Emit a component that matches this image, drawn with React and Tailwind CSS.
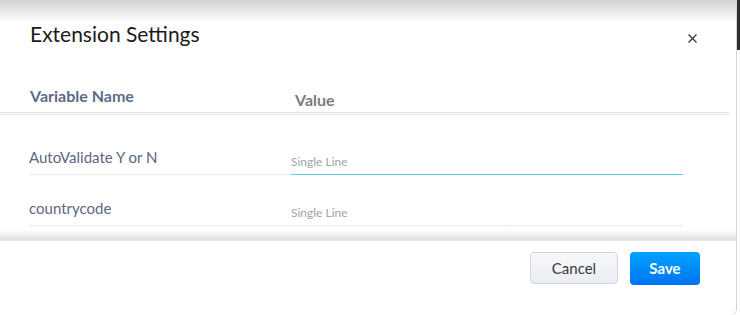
import React from "react";

export default function App() {
  const font = { fontFamily: "Lato, 'Open Sans', 'Liberation Sans', sans-serif" };
  return (
    <div className="w-[740px] h-[315px] bg-white overflow-hidden flex" style={font}>
      <div className="relative w-[737px] h-[315px] bg-white border-r border-[#d6d6d6] rounded-br-[6px] flex flex-col overflow-hidden">
        <div className="pointer-events-none absolute top-0 left-0 right-0 h-[22px] bg-gradient-to-b from-[#d2d2d2] to-white/0" />
        <div className="relative h-[240px] overflow-hidden">
          <div className="flex items-start justify-between pt-[21px] pl-[30px] pr-[39px]">
            <h1 className="text-[21px] leading-[26px] text-[#1b1b1b] font-normal">Extension Settings</h1>
            <svg className="mt-[13px]" width="9" height="9" viewBox="0 0 9 9" fill="none">
              <path d="M0.5 0.5L8.5 8.5M8.5 0.5L0.5 8.5" stroke="#333" strokeWidth="1.2" />
            </svg>
          </div>
          <div className="w-[729px] mt-[39px] pl-[30px] pb-[3px] flex border-b-[3px] border-double border-[#e3e3e3]">
            <div className="w-[265px] text-[16px] leading-[19px] font-bold text-[#5c6b88]">Variable Name</div>
            <div className="mt-[4px] text-[16px] leading-[19px] font-bold text-[#7b7b7b]">Value</div>
          </div>
          <div className="pl-[29px] mt-[33px] flex flex-col gap-[24px]">
            <div className="flex items-end">
              <div className="w-[262px] pb-[8px] text-[15px] leading-[18px] text-[#5d6781] border-b border-[#ececec]">AutoValidate Y or N</div>
              <div className="w-[392px] pb-[5px] text-[12px] leading-[14px] text-[#a3a3a3] border-b border-[#62c9ef]">Single Line</div>
            </div>
            <div className="flex items-end">
              <div className="w-[262px] pb-[8px] text-[15px] leading-[18px] text-[#5d6781] border-b border-[#ececec]">countrycode</div>
              <div className="w-[392px] pb-[5px] text-[12px] leading-[14px] text-[#a3a3a3] border-b border-[#ececec]">Single Line</div>
            </div>
          </div>
          <div className="pointer-events-none absolute bottom-0 left-0 right-0 h-[10px] bg-gradient-to-b from-white/0 to-[#e0e0e0]" />
        </div>
        <div className="border-t border-[#e6e6e6] flex justify-end gap-[12px] pt-[11px] pr-[36px]">
          <button className="w-[88px] h-[32px] rounded-[4px] border border-[#cfd4dd] bg-gradient-to-b from-[#f7f8fb] to-[#eaedf3] text-[15px] text-[#3a3a3a]">Cancel</button>
          <button className="w-[70px] h-[33px] rounded-[4px] bg-gradient-to-b from-[#00a3ff] to-[#0073f2] text-[15px] font-bold text-white">Save</button>
        </div>
      </div>
      <div className="flex-1 flex flex-col">
        <div className="h-[50px] bg-[#2e2e2e]" />
      </div>
    </div>
  );
}
